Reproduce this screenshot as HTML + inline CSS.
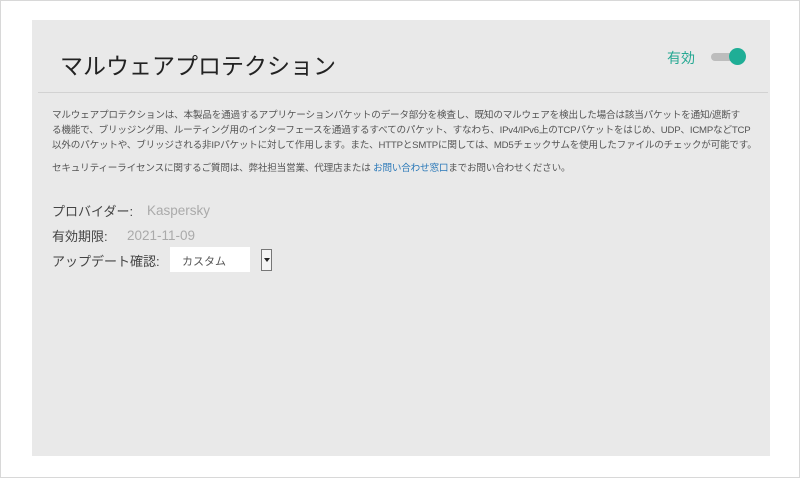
<!DOCTYPE html>
<html><head><meta charset="utf-8"><style>
body{margin:0;width:800px;height:478px;background:#fff;font-family:"Liberation Sans","Noto Sans CJK JP",sans-serif;position:relative;overflow:hidden}
.outer{position:absolute;left:0;top:0;width:798px;height:476px;border:1px solid #d8d8d8}
.panel{position:absolute;left:32px;top:20px;width:738px;height:436px;background:#e9e9e9}
.t{position:absolute;white-space:nowrap}
.b{position:absolute;left:20px;font-size:9.6px;color:#555;white-space:nowrap;letter-spacing:-0.2px}
</style></head><body>
<div class="outer"></div>
<div class="panel">
<div class="t" style="left:28px;top:27px;font-size:23px;color:#222">マルウェアプロテクション</div>
<div class="t" style="left:635px;top:28px;font-size:14px;color:#26a893">有効</div>
<div style="position:absolute;left:679px;top:33px;width:28px;height:8px;border-radius:4px;background:#bdbdbd"></div>
<div style="position:absolute;left:697px;top:28px;width:17px;height:17px;border-radius:50%;background:#1fae96"></div>
<div style="position:absolute;left:6px;top:72px;width:730px;height:1px;background:#d2d2d2"></div>
<div class="b" style="top:87px">マルウェアプロテクションは、本製品を通過するアプリケーションパケットのデータ部分を検査し、既知のマルウェアを検出した場合は該当パケットを通知/遮断す</div>
<div class="b" style="top:102px">る機能で、ブリッジング用、ルーティング用のインターフェースを通過するすべてのパケット、すなわち、IPv4/IPv6上のTCPパケットをはじめ、UDP、ICMPなどTCP</div>
<div class="b" style="top:117px">以外のパケットや、ブリッジされる非IPパケットに対して作用します。また、HTTPとSMTPに関しては、MD5チェックサムを使用したファイルのチェックが可能です。</div>
<div class="b" style="top:140px">セキュリティーライセンスに関するご質問は、弊社担当営業、代理店または <span style="color:#2a78b8">お問い合わせ窓口</span>までお問い合わせください。</div>
<div class="t" style="left:20px;top:181px;font-size:13px;color:#444">プロバイダー:</div>
<div class="t" style="left:115px;top:183px;font-size:13.5px;color:#aaa">Kaspersky</div>
<div class="t" style="left:20px;top:206px;font-size:13px;color:#444">有効期限:</div>
<div class="t" style="left:95px;top:208px;font-size:13.5px;color:#aaa">2021-11-09</div>
<div class="t" style="left:20px;top:231px;font-size:13px;color:#444">アップデート確認:</div>
<div style="position:absolute;left:138px;top:227px;width:80px;height:25px;background:#fff"></div>
<div class="t" style="left:150px;top:233px;font-size:11px;color:#555">カスタム</div>
<div style="position:absolute;left:229px;top:229px;width:11px;height:22px;border:1px solid #777;background:#f4f4f4;box-sizing:border-box"></div>
<div style="position:absolute;left:232px;top:238px;border-left:3px solid transparent;border-right:3px solid transparent;border-top:4px solid #222"></div>
</div>
</body></html>
